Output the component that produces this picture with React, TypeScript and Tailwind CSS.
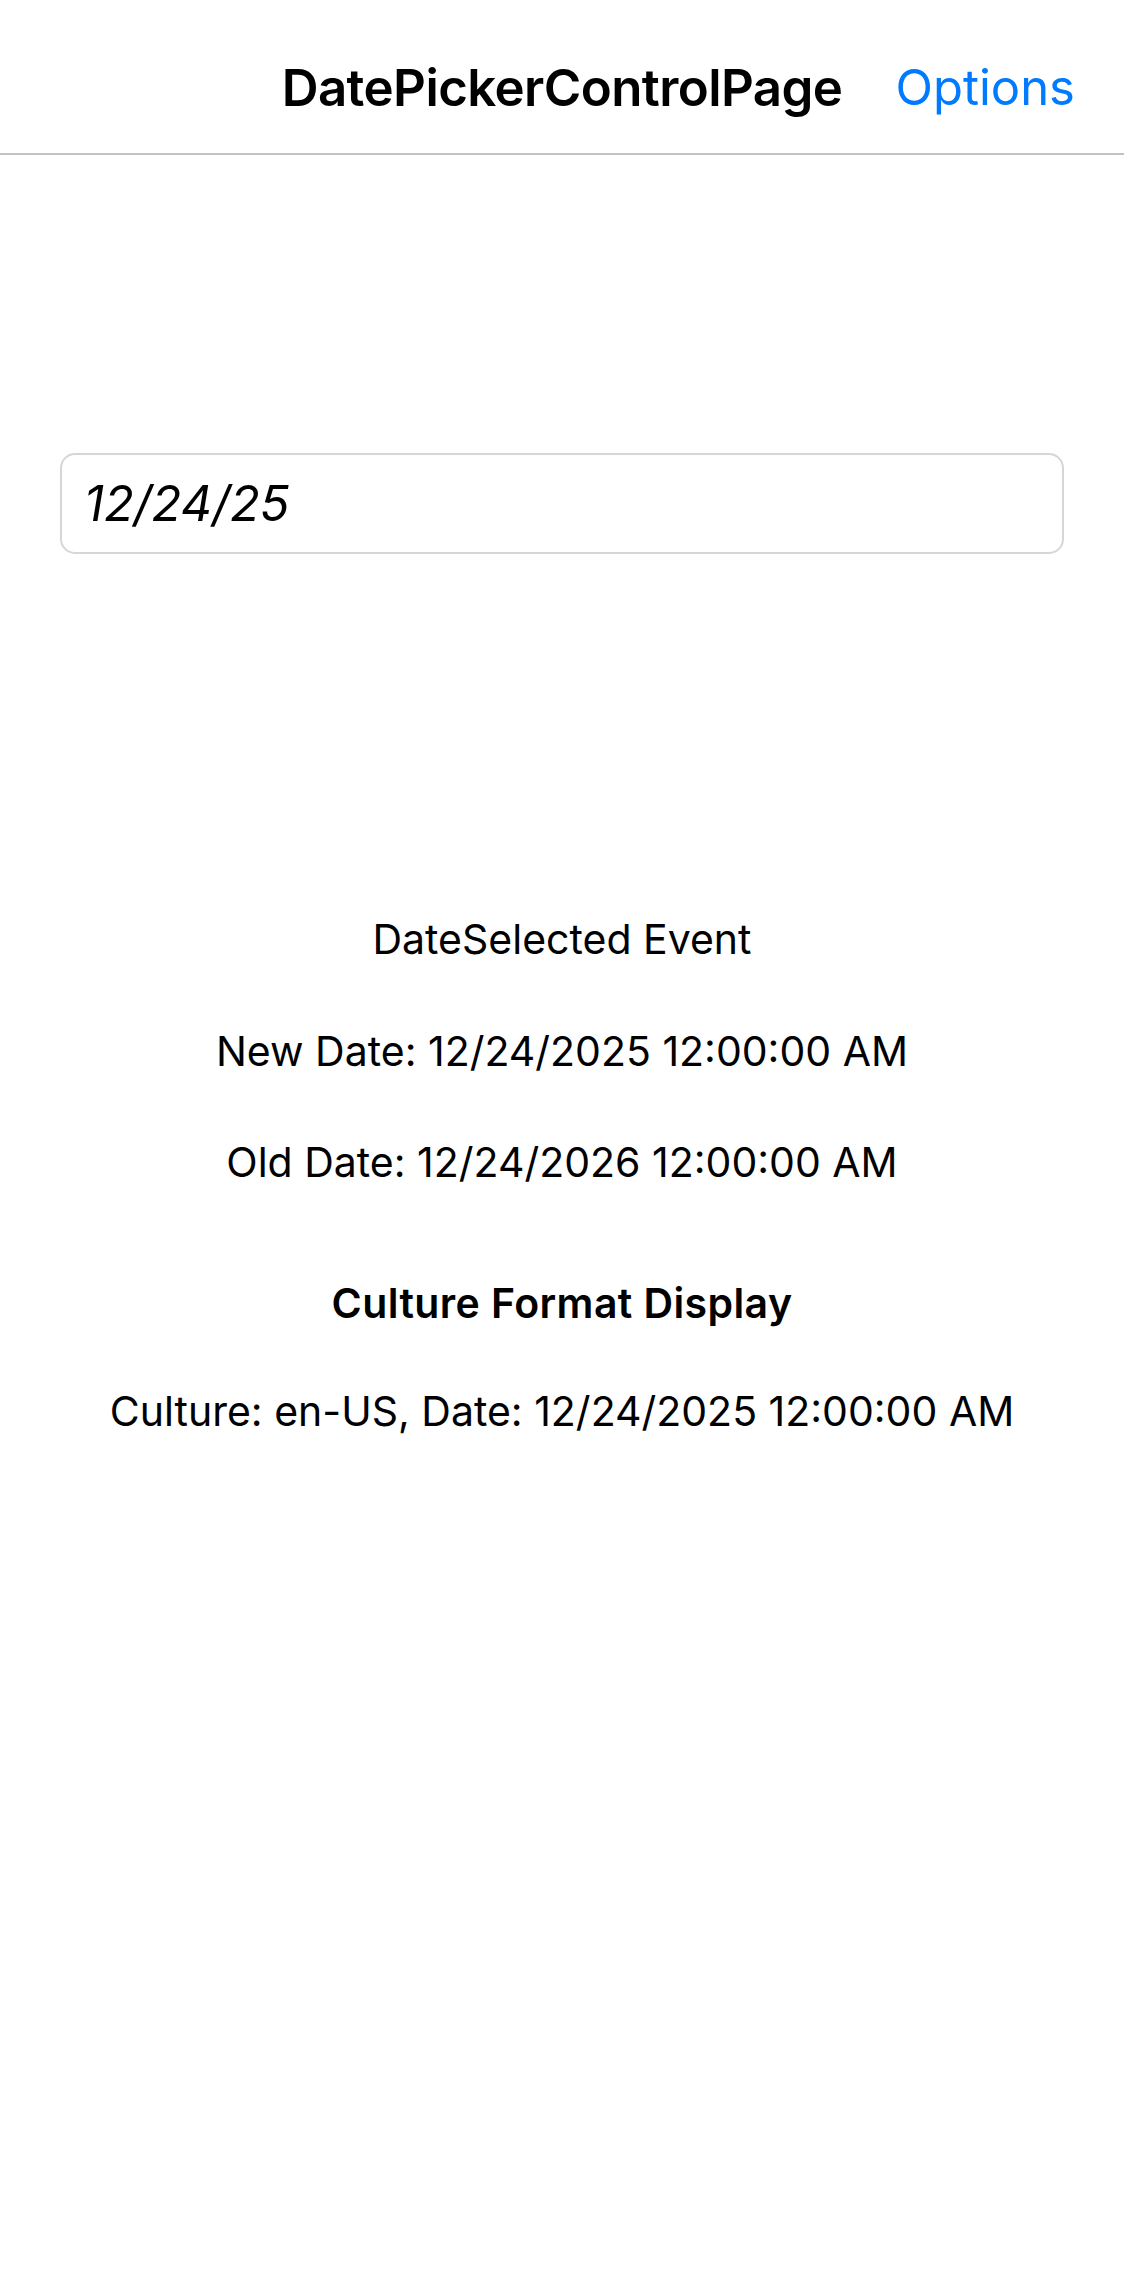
export default function App() {
  return (
    <div className="min-h-[2286px] w-full bg-white text-black font-['Inter','Liberation_Sans',sans-serif]">
      {/* Navigation bar */}
      <header className="grid h-[155px] grid-cols-[1fr_auto_1fr] items-start border-b-2 border-[#c2c2c2] pt-[62px]">
        <div />
        <h1 className="text-[51px] font-semibold leading-[51px] tracking-[-0.6px]">DatePickerControlPage</h1>
        <button className="justify-self-end pr-[49px] text-[49px] leading-[51px] text-[#007aff]">Options</button>
      </header>

      <main className="px-[60px]">
        {/* Date picker entry */}
        <div className="mt-[298px] flex h-[101px] items-center rounded-[15px] border-2 border-[#d6d6d6] px-[22px]">
          <span className="text-[49px] italic leading-[51px]">12/24/25</span>
        </div>

        {/* Event output */}
        <div className="flex flex-col items-center text-center text-[41px] leading-[38px]">
          <p className="mt-[366px]">DateSelected Event</p>
          <p className="mt-[74px]">New Date: 12/24/2025 12:00:00 AM</p>
          <p className="mt-[73px]">Old Date: 12/24/2026 12:00:00 AM</p>
          <p className="mt-[103px] font-semibold tracking-[0.4px]">Culture Format Display</p>
          <p className="mt-[70px]">Culture: en-US, Date: 12/24/2025 12:00:00 AM</p>
        </div>
      </main>
    </div>
  );
}
